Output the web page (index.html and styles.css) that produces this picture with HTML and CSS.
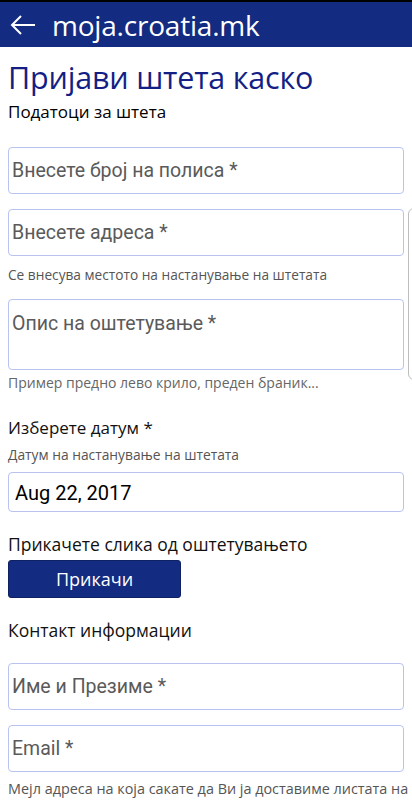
FILE: index.html
```html
<!DOCTYPE html>
<html lang="mk">
<head>
<meta charset="utf-8">
<title>moja.croatia.mk</title>
<link rel="stylesheet" href="styles.css">
</head>
<body>
<div class="statusbar"></div>
<header class="appbar">
  <svg class="back" width="26" height="20" viewBox="0 0 26 20" aria-hidden="true">
    <path d="M25 10H2M11 1L2 10l9 9" fill="none" stroke="#fff" stroke-width="2"/>
  </svg>
  <span class="apptitle">moja.croatia.mk</span>
</header>
<main class="page">
  <h1 class="title">Пријави штета каско</h1>
  <div class="section">Податоци за штета</div>
  <div class="field">Внесете број на полиса *</div>
  <div class="field">Внесете адреса *</div>
  <div class="help first">Се внесува местото на настанување на штетата</div>
  <div class="field area">Опис на оштетување *</div>
  <div class="help light">Пример предно лево крило, преден браник...</div>
  <div class="label date-label">Изберете датум *</div>
  <div class="help small">Датум на настанување на штетата</div>
  <div class="field date">Aug 22, 2017</div>
  <div class="label attach">Прикачете слика од оштетувањето</div>
  <button class="btn">Прикачи</button>
  <div class="label contact">Контакт информации</div>
  <div class="field">Име и Презиме *</div>
  <div class="field">Email *</div>
  <div class="help big">Мејл адреса на која сакате да Ви ја доставиме листата на</div>
</main>
<div class="scrollhint"></div>
</body>
</html>
```
FILE: styles.css
```css
* { box-sizing: border-box; }
html, body { margin: 0; padding: 0; background: #fff; }
body {
  width: 412px; height: 800px; overflow: hidden; position: relative;
  font-family: "Open Sans", "Noto Sans", sans-serif; color: #000;
}
.statusbar { height: 2px; background: #000; }
.appbar {
  height: 45px; background: #132b80;
  display: flex; align-items: center; padding-left: 10px;
}
.back { margin-right: 16px; }
.apptitle { color: #fff; font-size: 28px; line-height: 1; letter-spacing: -0.2px; margin-top: 1px; }
.page { padding: 0 8px; display: flex; flex-direction: column; }
.title {
  margin: 12px 0 0; font-weight: 400; font-size: 30.5px; line-height: 36px;
  color: #141f85; letter-spacing: -0.2px;
}
.section { font-size: 17px; line-height: 22px; margin-top: 6px; }
.field {
  border: 1px solid #b9c3ef; border-radius: 4px; height: 47px;
  font-family: Roboto, "Noto Sans", sans-serif; font-size: 19.5px; color: #5a5a5a;
  padding: 11px 0 0 3px; line-height: 24px;
}
.section + .field { margin-top: 24px; }
.field + .field { margin-top: 15px; }
.help { font-size: 13.7px; line-height: 18px; color: #555; }
.help.first { margin-top: 10px; }
.field.area { height: 71px; margin-top: 15px; padding-top: 12px; }
.help.light { color: #666; font-size: 14px; margin-top: 4px; }
.label { font-size: 17px; line-height: 22px; color: #111; }
.label.date-label { margin-top: 25px; }
.help.small { margin-top: 7px; font-size: 13.8px; }
.field.date {
  height: 40px; margin-top: 8px; color: #000; padding: 8px 0 0 6px;
  font-size: 20px;
}
.label.attach { font-size: 17.5px; margin-top: 21px; }
.btn {
  width: 173px; height: 38px; margin-top: 5px; border: 1px solid #0e2163; border-radius: 3px;
  background: #132b80; color: #fff; font-family: "Open Sans", "Noto Sans", sans-serif;
  font-size: 18px; padding: 0;
}
.label.contact { margin-top: 21px; font-size: 17.5px; }
.label.contact + .field { margin-top: 22px; }
.help.big { font-size: 14.4px; margin-top: 8px; color: #555; white-space: nowrap; }
.scrollhint {
  position: absolute; left: 408px; top: 208px; width: 12px; height: 172px;
  border: 1px solid #bdbdbd; border-radius: 6px 0 0 6px; background: #fff;
}
```
